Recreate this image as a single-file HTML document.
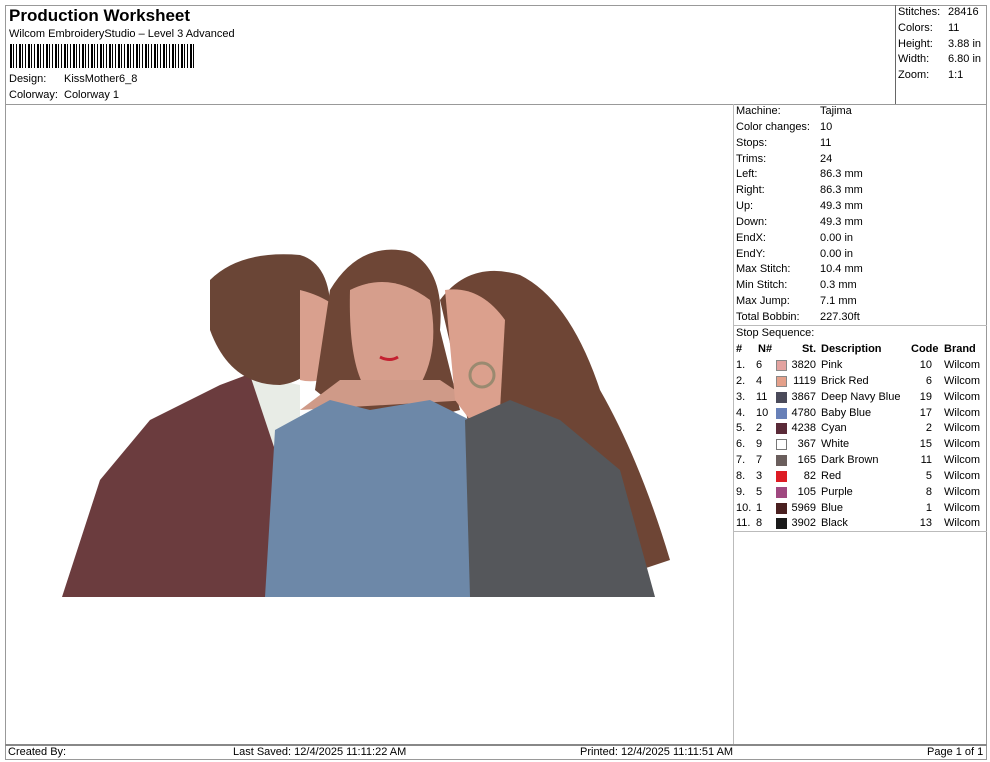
<!DOCTYPE html>
<html><head><meta charset="utf-8"><style>
*{margin:0;padding:0;box-sizing:border-box}
body{width:990px;height:762px;background:#fff;font-family:"Liberation Sans",Arial,sans-serif;color:#000;position:relative;overflow:hidden;font-size:11px}
.a{position:absolute;white-space:nowrap}
.l{position:absolute;background:#999}
</style></head><body>
<div class="l" style="left:5px;top:5px;width:982px;height:1px"></div>
<div class="l" style="left:5px;top:5px;width:1px;height:755px"></div>
<div class="l" style="left:986px;top:5px;width:1px;height:755px"></div>
<div class="l" style="left:5px;top:759px;width:982px;height:1px"></div>
<div class="l" style="left:5px;top:104px;width:982px;height:1px"></div>
<div class="l" style="left:895px;top:5px;width:1px;height:99px;background:#666"></div>
<div class="l" style="left:733px;top:104px;width:1px;height:641px;background:#bbb"></div>
<div class="l" style="left:5px;top:744px;width:982px;height:2px;background:#888"></div>
<div class="l" style="left:733px;top:325px;width:254px;height:1px;background:#bbb"></div>
<div class="l" style="left:733px;top:531px;width:254px;height:1px;background:#bbb"></div>

<div class="a" style="left:9px;top:6px;font-size:17px;font-weight:bold">Production Worksheet</div>
<div class="a" style="left:9px;top:28px">Wilcom EmbroideryStudio – Level 3 Advanced</div>
<div class="a" style="left:10px;top:44px;width:185px;height:24px;background:repeating-linear-gradient(90deg,#000 0 2px,#fff 2px 3px,#000 3px 4px,#fff 4px 6px,#000 6px 7px,#fff 7px 9px)"></div>
<div class="a" style="left:9px;top:73px">Design:</div><div class="a" style="left:64px;top:73px">KissMother6_8</div>
<div class="a" style="left:9px;top:89px">Colorway:</div><div class="a" style="left:64px;top:89px">Colorway 1</div>

<div class="a" style="left:898px;top:5px;line-height:15.8px">Stitches:<br>Colors:<br>Height:<br>Width:<br>Zoom:</div>
<div class="a" style="left:948px;top:5px;line-height:15.8px">28416<br>11<br>3.88 in<br>6.80 in<br>1:1</div>

<div class="a" style="left:736px;top:104px;line-height:15.85px">Machine:<br>Color changes:<br>Stops:<br>Trims:<br>Left:<br>Right:<br>Up:<br>Down:<br>EndX:<br>EndY:<br>Max Stitch:<br>Min Stitch:<br>Max Jump:<br>Total Bobbin:<br>Stop Sequence:</div>
<div class="a" style="left:820px;top:104px;line-height:15.85px">Tajima<br>10<br>11<br>24<br>86.3 mm<br>86.3 mm<br>49.3 mm<br>49.3 mm<br>0.00 in<br>0.00 in<br>10.4 mm<br>0.3 mm<br>7.1 mm<br>227.30ft</div>

<div style="position:absolute;left:736px;top:342px;line-height:15.85px;width:250px">
<div style="position:relative;height:15.85px;font-weight:bold;text-decoration:underline">
<span class="a" style="left:0">#</span><span class="a" style="left:22px">N#</span><span class="a" style="right:170px">St.</span><span class="a" style="left:85px">Description</span><span class="a" style="left:175px">Code</span><span class="a" style="left:208px">Brand</span></div>
</div>
<div style="position:absolute;left:736px;top:358px;width:250px;line-height:15.85px">
<div style="position:relative;height:15.85px"><span class="a" style="left:0">1.</span><span class="a" style="left:20px">6</span><i class="a" style="left:40px;top:2px;width:11px;height:11px;background:#e3a3a0;border:1px solid #888"></i><span class="a" style="right:170px">3820</span><span class="a" style="left:85px">Pink</span><span class="a" style="right:54px">10</span><span class="a" style="left:208px">Wilcom</span></div>
<div style="position:relative;height:15.85px"><span class="a" style="left:0">2.</span><span class="a" style="left:20px">4</span><i class="a" style="left:40px;top:2px;width:11px;height:11px;background:#e4a08a;border:1px solid #888"></i><span class="a" style="right:170px">1119</span><span class="a" style="left:85px">Brick Red</span><span class="a" style="right:54px">6</span><span class="a" style="left:208px">Wilcom</span></div>
<div style="position:relative;height:15.85px"><span class="a" style="left:0">3.</span><span class="a" style="left:20px">11</span><i class="a" style="left:40px;top:2px;width:11px;height:11px;background:#4a4a5a"></i><span class="a" style="right:170px">3867</span><span class="a" style="left:85px">Deep Navy Blue</span><span class="a" style="right:54px">19</span><span class="a" style="left:208px">Wilcom</span></div>
<div style="position:relative;height:15.85px"><span class="a" style="left:0">4.</span><span class="a" style="left:20px">10</span><i class="a" style="left:40px;top:2px;width:11px;height:11px;background:#6880b8"></i><span class="a" style="right:170px">4780</span><span class="a" style="left:85px">Baby Blue</span><span class="a" style="right:54px">17</span><span class="a" style="left:208px">Wilcom</span></div>
<div style="position:relative;height:15.85px"><span class="a" style="left:0">5.</span><span class="a" style="left:20px">2</span><i class="a" style="left:40px;top:2px;width:11px;height:11px;background:#5a2a38"></i><span class="a" style="right:170px">4238</span><span class="a" style="left:85px">Cyan</span><span class="a" style="right:54px">2</span><span class="a" style="left:208px">Wilcom</span></div>
<div style="position:relative;height:15.85px"><span class="a" style="left:0">6.</span><span class="a" style="left:20px">9</span><i class="a" style="left:40px;top:2px;width:11px;height:11px;background:#fff;border:1px solid #777"></i><span class="a" style="right:170px">367</span><span class="a" style="left:85px">White</span><span class="a" style="right:54px">15</span><span class="a" style="left:208px">Wilcom</span></div>
<div style="position:relative;height:15.85px"><span class="a" style="left:0">7.</span><span class="a" style="left:20px">7</span><i class="a" style="left:40px;top:2px;width:11px;height:11px;background:#6a5e5c"></i><span class="a" style="right:170px">165</span><span class="a" style="left:85px">Dark Brown</span><span class="a" style="right:54px">11</span><span class="a" style="left:208px">Wilcom</span></div>
<div style="position:relative;height:15.85px"><span class="a" style="left:0">8.</span><span class="a" style="left:20px">3</span><i class="a" style="left:40px;top:2px;width:11px;height:11px;background:#dd1c24"></i><span class="a" style="right:170px">82</span><span class="a" style="left:85px">Red</span><span class="a" style="right:54px">5</span><span class="a" style="left:208px">Wilcom</span></div>
<div style="position:relative;height:15.85px"><span class="a" style="left:0">9.</span><span class="a" style="left:20px">5</span><i class="a" style="left:40px;top:2px;width:11px;height:11px;background:#a04880"></i><span class="a" style="right:170px">105</span><span class="a" style="left:85px">Purple</span><span class="a" style="right:54px">8</span><span class="a" style="left:208px">Wilcom</span></div>
<div style="position:relative;height:15.85px"><span class="a" style="left:0">10.</span><span class="a" style="left:20px">1</span><i class="a" style="left:40px;top:2px;width:11px;height:11px;background:#4a2020"></i><span class="a" style="right:170px">5969</span><span class="a" style="left:85px">Blue</span><span class="a" style="right:54px">1</span><span class="a" style="left:208px">Wilcom</span></div>
<div style="position:relative;height:15.85px"><span class="a" style="left:0">11.</span><span class="a" style="left:20px">8</span><i class="a" style="left:40px;top:2px;width:11px;height:11px;background:#1a1a1a"></i><span class="a" style="right:170px">3902</span><span class="a" style="left:85px">Black</span><span class="a" style="right:54px">13</span><span class="a" style="left:208px">Wilcom</span></div>
</div>

<svg class="a" style="left:0;top:0" width="733" height="744">
<path d="M62 597 L100 480 L150 420 L220 385 L260 370 L285 390 L290 597 Z" fill="#6b3c3e"/>
<path d="M250 375 L300 385 L300 430 L275 450 Z" fill="#e8ece6"/>
<path d="M210 280 Q240 250 300 255 Q335 265 330 330 Q320 380 280 385 Q230 385 210 330 Z" fill="#6a4536"/>
<path d="M300 290 Q340 300 355 330 L345 370 Q320 385 300 380 Z" fill="#d9a08e"/>
<path d="M330 290 Q360 240 410 252 Q445 270 440 330 L460 410 L420 420 L340 410 L315 390 Z" fill="#6e4636"/>
<path d="M350 290 Q390 270 430 300 Q440 350 420 385 Q395 405 370 395 Q348 370 350 290 Z" fill="#d69e8c"/>
<path d="M340 380 L440 380 L470 400 L300 410 Z" fill="#cf9a88"/>
<path d="M275 430 L330 400 L370 410 L430 400 L470 420 L490 597 L265 597 Z" fill="#6d88a8"/>
<path d="M440 300 Q470 260 520 275 Q570 300 600 390 Q640 460 670 560 L640 570 L600 500 L520 430 L470 430 Z" fill="#6e4535"/>
<path d="M445 290 Q480 285 505 320 L500 410 L470 420 L455 400 Z" fill="#dba08d"/>
<path d="M465 420 L510 400 L560 420 L620 470 L655 597 L470 597 Z" fill="#55575b"/>
<circle cx="482" cy="375" r="12" fill="none" stroke="#9a8a70" stroke-width="3"/>
<path d="M380 357 Q390 362 398 357" stroke="#c42030" stroke-width="3" fill="none"/>
</svg>

<div class="a" style="left:8px;top:746px">Created By:</div>
<div class="a" style="left:233px;top:746px">Last Saved: 12/4/2025 11:11:22 AM</div>
<div class="a" style="left:580px;top:746px">Printed: 12/4/2025 11:11:51 AM</div>
<div class="a" style="left:927px;top:746px">Page 1 of 1</div>
</body></html>
